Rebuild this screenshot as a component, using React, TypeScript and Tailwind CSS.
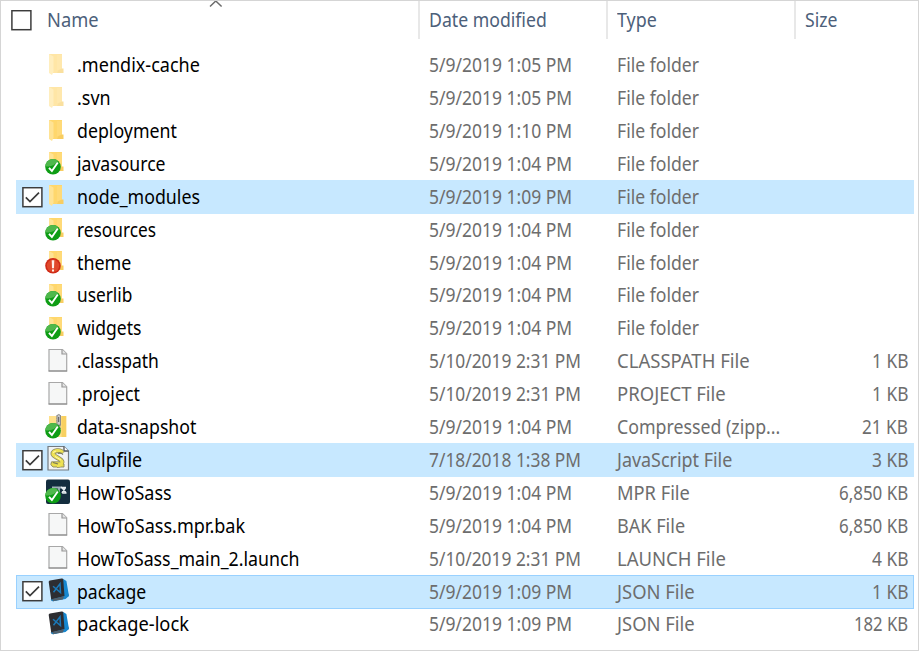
import { useLayoutEffect, useRef, useState } from "react";

type IconKind =
  | "faded"
  | "folder"
  | "folderOk"
  | "folderError"
  | "file"
  | "zip"
  | "script"
  | "mendix"
  | "code";

type Entry = {
  name: string;
  nameWidth: number;
  icon: IconKind;
  date: string;
  type: string;
  typeWidth: number;
  size?: string;
  sizeWidth?: number;
  selected?: boolean;
  focused?: boolean;
};

const entries: Entry[] = [
  { name: ".mendix-cache", nameWidth: 122.5, icon: "faded", date: "5/9/2019 1:05 PM", type: "File folder", typeWidth: 82.5 },
  { name: ".svn", nameWidth: 34, icon: "faded", date: "5/9/2019 1:05 PM", type: "File folder", typeWidth: 82.5 },
  { name: "deployment", nameWidth: 100, icon: "folder", date: "5/9/2019 1:10 PM", type: "File folder", typeWidth: 82.5 },
  { name: "javasource", nameWidth: 89, icon: "folderOk", date: "5/9/2019 1:04 PM", type: "File folder", typeWidth: 82.5 },
  { name: "node_modules", nameWidth: 122.5, icon: "folder", date: "5/9/2019 1:09 PM", type: "File folder", typeWidth: 82.5, selected: true },
  { name: "resources", nameWidth: 79, icon: "folderOk", date: "5/9/2019 1:04 PM", type: "File folder", typeWidth: 82.5 },
  { name: "theme", nameWidth: 54.5, icon: "folderError", date: "5/9/2019 1:04 PM", type: "File folder", typeWidth: 82.5 },
  { name: "userlib", nameWidth: 55.5, icon: "folderOk", date: "5/9/2019 1:04 PM", type: "File folder", typeWidth: 82.5 },
  { name: "widgets", nameWidth: 64.5, icon: "folderOk", date: "5/9/2019 1:04 PM", type: "File folder", typeWidth: 82.5 },
  { name: ".classpath", nameWidth: 82, icon: "file", date: "5/10/2019 2:31 PM", type: "CLASSPATH File", typeWidth: 132.5, size: "1 KB", sizeWidth: 36.5 },
  { name: ".project", nameWidth: 62.5, icon: "file", date: "5/10/2019 2:31 PM", type: "PROJECT File", typeWidth: 109, size: "1 KB", sizeWidth: 36.5 },
  { name: "data-snapshot", nameWidth: 119, icon: "zip", date: "5/9/2019 1:04 PM", type: "Compressed (zipp...", typeWidth: 163.5, size: "21 KB", sizeWidth: 46 },
  { name: "Gulpfile", nameWidth: 65, icon: "script", date: "7/18/2018 1:38 PM", type: "JavaScript File", typeWidth: 115, size: "3 KB", sizeWidth: 36.5, selected: true },
  { name: "HowToSass", nameWidth: 94.5, icon: "mendix", date: "5/9/2019 1:04 PM", type: "MPR File", typeWidth: 73, size: "6,850 KB", sizeWidth: 69.5 },
  { name: "HowToSass.mpr.bak", nameWidth: 168, icon: "file", date: "5/9/2019 1:04 PM", type: "BAK File", typeWidth: 68.5, size: "6,850 KB", sizeWidth: 69.5 },
  { name: "HowToSass_main_2.launch", nameWidth: 222.5, icon: "file", date: "5/10/2019 2:31 PM", type: "LAUNCH File", typeWidth: 109, size: "4 KB", sizeWidth: 36.5 },
  { name: "package", nameWidth: 69.5, icon: "code", date: "5/9/2019 1:09 PM", type: "JSON File", typeWidth: 77.5, size: "1 KB", sizeWidth: 36.5, selected: true, focused: true },
  { name: "package-lock", nameWidth: 111.5, icon: "code", date: "5/9/2019 1:09 PM", type: "JSON File", typeWidth: 77.5, size: "182 KB", sizeWidth: 54.5 },
];

/** One line of text condensed or widened to a given advance width. */
function Label({ text, width }: { text: string; width: number }) {
  const ref = useRef<HTMLSpanElement>(null);
  const [scale, setScale] = useState(1);
  useLayoutEffect(() => {
    if (ref.current) setScale(width / ref.current.offsetWidth);
  }, [text, width]);
  return (
    <span className="-mt-[0.500px] block" style={{ width }}>
      <span
        ref={ref}
        className="inline-block origin-left whitespace-nowrap"
        style={{ transform: `scaleX(${scale})` }}
      >
        {text}
      </span>
    </span>
  );
}

function Checkbox({ checked }: { checked?: boolean }) {
  return (
    <svg width="21" height="21" viewBox="0 0 21 21" className="block shrink-0">
      <rect x="0.9" y="0.7" width="19" height="19" fill="#fff" stroke="#3c3c3c" strokeWidth="1.5" />
      {checked && <path d="M3.8 10.3 8 14.600 17 5.600" fill="none" stroke="#3a3a3a" strokeWidth="1.7" />}
    </svg>
  );
}

function Folder({ faded }: { faded?: boolean }) {
  return (
    <g opacity={faded ? 0.6 : 1}>
      <path d="M5 3h13v15.500h1V22H8L5 20z" fill="#ffd76c" />
      <path d="M13 4h5v15h-5z" fill="#ffda78" />
      <path d="M18 17.500h1.500v4.500H13l1.500-3z" fill="#f8cd61" />
      <path d="M5 3l4.500 2.500v15L8 24l-3-2z" fill="#ffe394" />
    </g>
  );
}

function OkBadge() {
  return (
    <g>
      <circle cx="9" cy="17.800" r="7.800" fill="#0e9d15" />
      <path d="M1.400 17.300a7.600 7.600 0 0 1 12.700-5.200C11 16.300 7 18.300 1.400 17.300z" fill="#4fb84c" />
      <path d="M5 18.800 7.900 22l5.900-8.500" fill="none" stroke="#fff" strokeWidth="1.900" />
    </g>
  );
}

function EntryIcon({ kind }: { kind: IconKind }) {
  return (
    <svg width="28" height="28" viewBox="0 0 28 28" className="-mt-[1.500px] block shrink-0">
      {(kind === "folder" || kind === "faded") && <Folder faded={kind === "faded"} />}
      {kind === "folderOk" && (
        <>
          <Folder />
          <OkBadge />
        </>
      )}
      {kind === "folderError" && (
        <>
          <Folder />
          <circle cx="9" cy="17.800" r="7.800" fill="#cf2a17" />
          <circle cx="9" cy="17.800" r="6.200" fill="#e0492b" />
          <path d="M7.700 12.200h2.600l-.3 8H8zM8 21.500h2v2H8z" fill="#fff0e8" />
        </>
      )}
      {kind === "file" && (
        <>
          <path d="M5 2.500h13.500l4.200 4.200V24H5z" fill="#f6f7f7" stroke="#a8a8a8" strokeWidth="1.200" />
          <path d="M4.600 24h18.500" stroke="#8e8e8e" strokeWidth="1.200" />
          <path d="M18 2.500V7h4.700" fill="#e5e5e5" stroke="#979797" strokeWidth="1.200" />
        </>
      )}
      {kind === "zip" && (
        <>
          <path d="M5 3h17.500v21H8L5 22z" fill="#ffe08a" />
          <path d="M17.500 3H22v21h-4.500z" fill="#f8d061" />
          <path d="M14.600 2v18" stroke="#868686" strokeWidth="4" strokeDasharray="1.500 1" />
          <path d="M13 2.500q1.800-2 3.500 0V12H13z" fill="#c8c8c8" stroke="#8b8b8b" />
          <path d="M14.700 4v5" stroke="#565656" />
          <OkBadge />
        </>
      )}
      {kind === "script" && (
        <>
          <path d="M4 1.500h16l4.500 4.500v19H4z" fill="#f1f3f3" stroke="#747b80" strokeWidth="1.200" />
          <path d="M20 1.500V6h4.500" fill="#fff" stroke="#4f5559" strokeWidth="1.300" />
          <path d="M18.500 8C17 4.500 8.500 5 9 9c.4 3 9 4.500 9 8 0 2.500-3 3.500-5 3.500" fill="none" stroke="#8b8963" strokeWidth="5" />
          <path d="M7.500 16.800h8q2.500 2.500 4.500 2.200v3H9q-3.500-2-1.500-5.200z" fill="#e9dd4c" stroke="#8b8963" strokeWidth=".9" />
          <path d="M18.300 7.800C17 4.500 8.500 5 9 9c.4 3 9 4.500 9 8 0 2.500-3 3.500-5 3.500" fill="none" stroke="#eee253" strokeWidth="3.300" />
          <path d="M14 8.500q2.500-1.500 5 1M9 17.500l5 1.500" fill="none" stroke="#77765a" strokeWidth="1.200" />
          <path d="m11 11.500 6 3.500M9 7.500l3-1.500" stroke="#fff9b0" strokeWidth="1" />
        </>
      )}
      {kind === "mendix" && (
        <>
          <rect x="2" y="1.500" width="24" height="24.500" rx="2" fill="#132d3e" />
          <path d="M8 9.500h10M10 9.500v5m5-5v5" stroke="#9fb0b8" strokeWidth="1.800" />
          <path d="M17 9.500h5M18 15h4.500M21.500 9.500 18 15M18 9.500l4 5.500" stroke="#e5ecef" strokeWidth="1.500" />
          <OkBadge />
        </>
      )}
      {kind === "code" && (
        <g transform="translate(0 .7)">
          <path d="M4.700 4.200Q4.600 3 6 2.700L17.500.8q1.500-.2 2 .8L24.500 17q.3 1.300-.8 2L10.300 23.400q-1.500.5-3-.8z" fill="#2d2d31" />
          <path d="m19.200 1.200 3.200 2.200L25 18.200l-3.500 3L8.700 23.500 6.500 22l14-3.800z" fill="#1687cf" />
          <path d="m8.200 21.400 12-2.900-1.400 3.300-9.600 1.400z" fill="#52606b" />
          <path d="m9 8.500 7.500 6.300L16 6l-6.500 8.500" fill="none" stroke="#1a78b8" strokeWidth="1.500" />
        </g>
      )}
    </svg>
  );
}

function Row({ entry }: { entry: Entry }) {
  const surface = entry.focused
    ? "bg-[#c7e8ff] outline-[#99d1ff]"
    : entry.selected
      ? "bg-[#c7e8ff] outline-transparent"
      : "outline-transparent";
  return (
    <li className="h-[32.9px]">
      <div className={`flex h-[34px] items-center pl-[6px] pr-[6px] outline-[1.5px] -outline-offset-[1.5px] ${surface}`}>
        <div className="w-[21px] shrink-0">{entry.selected && <Checkbox checked />}</div>
        <div className="w-[34px] shrink-0 pl-px">
          <EntryIcon kind={entry.icon} />
        </div>
        <div className="w-[352px] shrink-0 text-black">
          <Label text={entry.name} width={entry.nameWidth} />
        </div>
        <div className="w-[188px] shrink-0">
          <Label text={entry.date} width={entry.date.length > 16 ? 152.5 : 143.5} />
        </div>
        <div className="w-[187px] shrink-0">
          <Label text={entry.type} width={entry.typeWidth} />
        </div>
        <div className="flex flex-1 justify-end">
          {entry.size && <Label text={entry.size} width={entry.sizeWidth ?? 36.5} />}
        </div>
      </div>
    </li>
  );
}

export default function App() {
  return (
    <main className="h-[651px] w-[919px] overflow-hidden border border-[#d5d5d5] bg-white font-['Noto_Sans','Open_Sans',sans-serif] text-[19px] leading-[28px] text-[#6d6d6d]">
      <header className="flex h-[38px] items-center text-[#4c607a]">
        <div className="flex w-[417px] shrink-0 items-center pl-[10px]">
          <Checkbox />
          <div className="w-[176px] pl-[15px]">
            <Label text="Name" width={52} />
          </div>
          <svg width="14" height="8" viewBox="0 0 14 8" className="-mt-[32px] ml-px block">
            <path d="M1 6.500 6.800 1 12.600 6.500" fill="none" stroke="#6b6b6b" strokeWidth="1.500" />
          </svg>
        </div>
        <div className="flex h-full w-[188px] shrink-0 items-center border-l-2 border-[#e8e8e8] pl-[8.500px]">
          <Label text="Date modified" width={118} />
        </div>
        <div className="flex h-full w-[188px] shrink-0 items-center border-l-2 border-[#e8e8e8] pl-[9px]">
          <Label text="Type" width={39.5} />
        </div>
        <div className="flex h-full flex-1 items-center border-l-2 border-[#e8e8e8] pl-[9px]">
          <Label text="Size" width={32.5} />
        </div>
      </header>
      <ul className="ml-[15px] mr-[4px] mt-[9.500px]">
        {entries.map((entry) => (
          <Row key={entry.name} entry={entry} />
        ))}
      </ul>
    </main>
  );
}
